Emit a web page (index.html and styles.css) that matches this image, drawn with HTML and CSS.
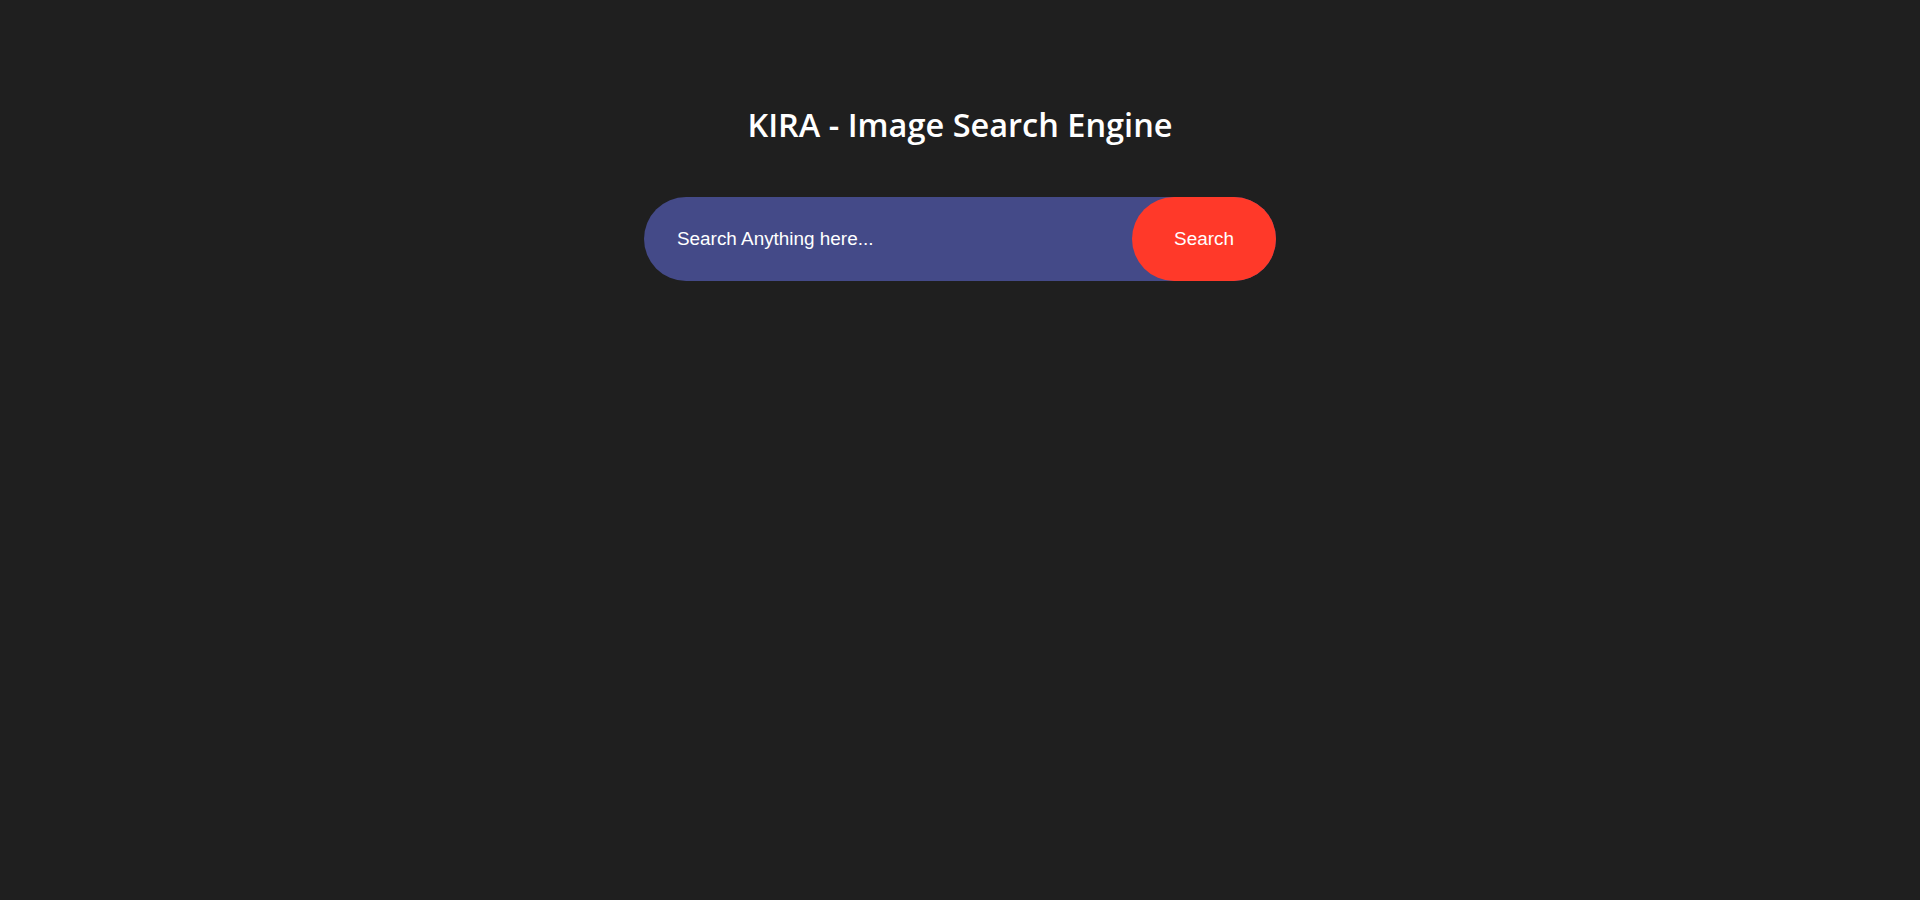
FILE: index.html
```html
<!DOCTYPE html>
<html lang="en">
<head>
<meta charset="utf-8">
<title>KIRA - Image Search Engine</title>
<link rel="stylesheet" href="styles.css">
</head>
<body>
<main class="page">
  <h1 class="title">KIRA - Image Search Engine</h1>
  <form class="search">
    <input class="search-input" type="text" placeholder="Search Anything here...">
    <button class="search-btn" type="button">Search</button>
  </form>
</main>
</body>
</html>
```
FILE: styles.css
```css
html, body {
  margin: 0;
  padding: 0;
  background: #1f1f1f;
  height: 100%;
}
.page {
  display: flex;
  flex-direction: column;
  align-items: center;
  padding-top: 100px;
}
.title {
  margin: 0;
  color: #ffffff;
  font-family: "Open Sans", "Noto Sans", sans-serif;
  font-weight: 600;
  font-size: 32.5px;
  line-height: 50px;
}
.search {
  margin-top: 47px;
  width: 632px;
  height: 84px;
  display: flex;
  background: #444a88;
  border-radius: 42px;
}
.search-input {
  flex: 1;
  min-width: 0;
  border: none;
  outline: none;
  background: transparent;
  padding: 0 0 0 33px;
  color: #ffffff;
  font-family: "Liberation Sans", Arial, sans-serif;
  font-size: 18.9px;
}
.search-input::placeholder {
  color: #ffffff;
  opacity: 1;
}
.search-btn {
  width: 144px;
  border: none;
  border-radius: 42px;
  background: #ff3929;
  color: #ffffff;
  font-family: "Liberation Sans", Arial, sans-serif;
  font-size: 18.9px;
  cursor: pointer;
}
```
